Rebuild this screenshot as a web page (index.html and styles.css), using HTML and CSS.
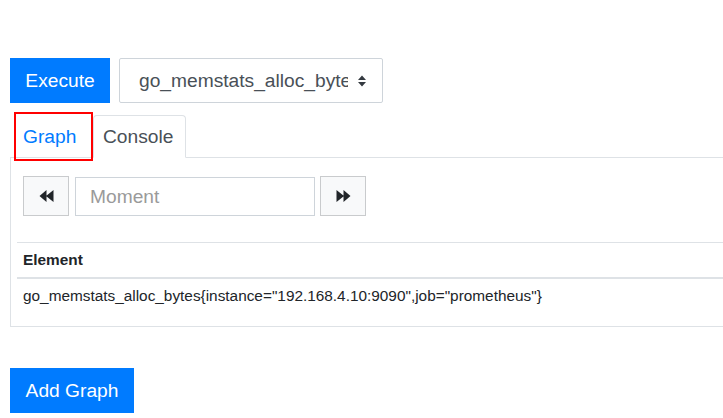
FILE: index.html
```html
<!DOCTYPE html>
<html>
<head>
<meta charset="utf-8">
<link rel="stylesheet" href="styles.css">
</head>
<body>
<div class="page">
  <div class="query-row">
    <button class="btn btn-primary btn-execute">Execute</button>
    <div class="select">
      <span class="select-text">go_memstats_alloc_bytes</span>
      <svg class="select-arrow" width="8" height="12" viewBox="0 0 8 12"><path d="M0 5 L4 0.5 L8 5 Z M0 7 L8 7 L4 11.5 Z" fill="#343a40"/></svg>
    </div>
  </div>
  <div class="nav-tabs">
    <div class="tab tab-graph">Graph</div>
    <div class="tab tab-console active">Console</div>
  </div>
  <div class="tab-content">
    <div class="controls">
      <button class="btn-light"><svg width="15" height="12" viewBox="0 0 15 12"><path d="M0.5 6 L7.5 0 L7.5 12 Z M7 6 L14.5 0 L14.5 12 Z" fill="#212529"/></svg></button>
      <div class="moment">Moment</div>
      <button class="btn-light"><svg width="15" height="12" viewBox="0 0 15 12"><path d="M0.5 0 L8 6 L0.5 12 Z M7.5 0 L14.5 6 L7.5 12 Z" fill="#212529"/></svg></button>
    </div>
    <table class="results">
      <thead><tr><th>Element</th></tr></thead>
      <tbody><tr><td>go_memstats_alloc_bytes{instance="192.168.4.10:9090",job="prometheus"}</td></tr></tbody>
    </table>
  </div>
  <button class="btn btn-primary btn-add">Add Graph</button>
</div>
</body>
</html>
```

FILE: styles.css
```css
html, body {
  margin: 0;
  padding: 0;
  overflow: hidden;
  background: #fff;
}
body {
  font-family: "Liberation Sans", Arial, sans-serif;
  color: #212529;
}
.page {
  padding: 58px 0 0 10px;
  width: 820px;
}
.query-row {
  display: flex;
  gap: 9px;
  height: 45px;
}
.btn {
  font-family: inherit;
  border: none;
  height: 45px;
  font-size: 19.2px;
  padding: 0;
  cursor: pointer;
}
.btn-primary {
  background: #007bff;
  color: #fff;
}
.btn-execute {
  width: 100px;
}
.select {
  box-sizing: border-box;
  width: 264px;
  height: 45px;
  border: 1px solid #ced4da;
  border-radius: 2px;
  display: flex;
  align-items: center;
  padding: 0 16px 0 19px;
  gap: 10px;
}
.select-text {
  flex: 1;
  overflow: hidden;
  white-space: nowrap;
  font-size: 19.2px;
  color: #495057;
}
.select-arrow {
  flex: none;
  margin-top: 1px;
}
.nav-tabs {
  display: flex;
  align-items: flex-end;
  margin-top: 12px;
  height: 42px;
  border-bottom: 1px solid #dee2e6;
}
.tab {
  box-sizing: border-box;
  height: 43px;
  margin-bottom: -1px;
  border: 1px solid transparent;
  font-size: 19.2px;
  line-height: 41px;
  padding-left: 8px;
  position: relative;
}
.tab-graph {
  margin-left: 4px;
  width: 79px;
  color: #007bff;
}
.tab-graph::after {
  content: "";
  position: absolute;
  top: -4px;
  bottom: -4px;
  left: -1px;
  right: -1px;
  border: 2px solid #ff0000;
}
.tab-console {
  width: 93px;
  color: #495057;
  border-color: #dee2e6 #dee2e6 #fff;
  border-radius: 4px 4px 0 0;
  padding-left: 9px;
  background: #fff;
}
.tab-content {
  border: 1px solid #dee2e6;
  border-top: none;
  padding: 18px 0 13px 6px;
}
.controls {
  display: flex;
  align-items: center;
  margin-left: 6px;
  height: 40px;
}
.btn-light {
  box-sizing: border-box;
  width: 46px;
  height: 40px;
  background: #f8f9fa;
  border: 1px solid #c9cbcd;
  padding: 0;
  display: flex;
  align-items: center;
  justify-content: center;
}
.moment {
  box-sizing: border-box;
  width: 240px;
  height: 39px;
  margin: 0 5px 0 6px;
  border: 1px solid #ced4da;
  font-size: 19.2px;
  color: #9a9a9a;
  padding-left: 14px;
  line-height: 37px;
}
.results {
  margin-top: 26px;
  width: 100%;
  border-collapse: separate;
  border-spacing: 0;
  font-size: 15.36px;
}
.results th, .results td {
  text-align: left;
  padding: 6px;
  line-height: 22px;
}
.results th {
  font-weight: bold;
  border-top: 1px solid #dee2e6;
  border-bottom: 2px solid #dee2e6;
}
.btn-add {
  margin-top: 41px;
  width: 124px;
}
```
